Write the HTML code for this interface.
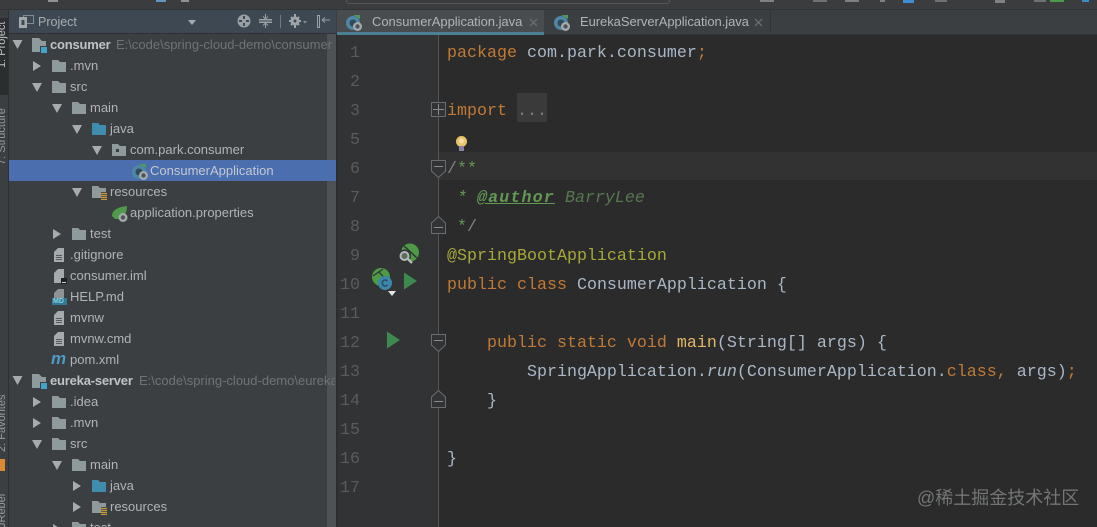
<!DOCTYPE html>
<html><head><meta charset="utf-8">
<style>
html,body{margin:0;padding:0;background:#3c3f41}
#r{position:relative;width:1097px;height:527px;overflow:hidden;background:#3c3f41;font-family:"Liberation Sans",sans-serif;filter:blur(.35px)}
.a{position:absolute}
.t{position:absolute;font-size:13px;line-height:16px;color:#b0b4b6;white-space:pre}
.b{font-weight:bold;color:#bfc3c5;letter-spacing:-.2px}
.g{color:#6f7375}
.c{position:absolute;left:447px;font-family:"Liberation Mono",monospace;font-size:16.67px;line-height:20px;color:#a9b7c6;white-space:pre}
.k{color:#c07a35}
.n{position:absolute;width:22px;text-align:right;left:338px;font-family:"Liberation Mono",monospace;font-size:16.67px;line-height:20px;color:#595c5d}
.v{position:absolute;left:-33px;width:70px;font-size:11px;line-height:16px;white-space:pre;color:#9a9d9f;transform:rotate(-90deg)}
svg{position:absolute;overflow:visible}
</style></head><body><div id="r">
<svg width="0" height="0" style="position:absolute">
<defs>
<symbol id="fo" viewBox="0 0 14 12"><path d="M0 0H6L8 2H14V12H0Z" fill="#8f9a9d"/></symbol>
<symbol id="fb" viewBox="0 0 14 12"><path d="M0 0H6L8 2H14V12H0Z" fill="#3f8caf"/></symbol>
<symbol id="fp" viewBox="0 0 14 12"><path d="M0 0H6L8 2H14V12H0Z" fill="#8f9a9d"/><rect x="4" y="5" width="3" height="3" fill="#3c3f41"/></symbol>
<symbol id="fr" viewBox="0 0 15 14"><path d="M0 0H6L8 2H14V6H9V12H0Z" fill="#8f9a9d"/><path d="M9 7.5H15M9 9.5H15M9 11.500H15M9 13.500H15" stroke="#c9993f" stroke-width="1.200"/></symbol>
<symbol id="mo" viewBox="0 0 15 15"><path d="M0 0H7L10 3H14V14H0Z" fill="#8f9a9d"/><rect x="8" y="8" width="7" height="7" fill="#3c3f41"/><rect x="9" y="9" width="6" height="6" fill="#3fa2cf"/></symbol>
<symbol id="fi" viewBox="0 0 10 14"><path d="M0 4L4 0H10V14H0Z" fill="#a5abad"/><path d="M2 7.500H8M2 9.500H8M2 11.500H8" stroke="#55595b" stroke-width=".9"/></symbol>
<symbol id="down" viewBox="0 0 10 9"><path d="M0 0H10L5 9Z" fill="#a7abad"/></symbol>
<symbol id="right" viewBox="0 0 8 10"><path d="M0 0L8 5L0 10Z" fill="#a7abad"/></symbol>
<symbol id="jc" viewBox="0 0 16 16"><circle cx="7" cy="8" r="7" fill="#4d87a5"/><circle cx="7" cy="8" r="3.500" fill="#34495a"/><path d="M7 0L14 4V0Z" fill="#4a9c56"/><circle cx="11.500" cy="11.500" r="4.500" fill="#a5abad"/><circle cx="11.500" cy="11.500" r="2.200" fill="#4f5557"/></symbol>
<symbol id="spr" viewBox="0 0 16 16"><path d="M0 10C0 4 6 1 15 0C15 4 14 10 8 13L3 13Z" fill="#4f9a4a"/><circle cx="11" cy="11.500" r="4.500" fill="#a5abad"/><circle cx="11" cy="11.500" r="2.200" fill="#4f5557"/></symbol>
<symbol id="ply" viewBox="0 0 13 17"><path d="M0 0L13 8.500L0 17Z" fill="#3e8a4e"/></symbol>
</defs>
</svg>

<!-- top toolbar -->
<div class="a" style="left:0;top:0;width:1097px;height:9px;background:#3a3c3e;border-bottom:1px solid #323436"></div>
<div class="a" style="left:346px;top:0;width:322px;height:3px;border:1px solid #55585a;border-top:none;border-radius:0 0 3px 3px"></div>
<div class="a" style="left:48px;top:0;width:10px;height:2px;background:#8f9395"></div>
<div class="a" style="left:156px;top:0;width:10px;height:2px;background:#5e97c6"></div>
<div class="a" style="left:181px;top:0;width:8px;height:2px;background:#8f9395"></div>
<div class="a" style="left:760px;top:0;width:14px;height:2px;background:#7d8183"></div>
<div class="a" style="left:813px;top:0;width:14px;height:2px;background:#6d7173"></div>
<div class="a" style="left:845px;top:0;width:14px;height:2px;background:#7d8183"></div>
<div class="a" style="left:880px;top:0;width:5px;height:2px;background:#7d8183"></div>
<div class="a" style="left:903px;top:0;width:11px;height:3px;background:#3f8fd0"></div>
<div class="a" style="left:935px;top:0;width:12px;height:2px;background:#6d7173"></div>
<div class="a" style="left:995px;top:0;width:10px;height:3px;background:#7d8183"></div>
<div class="a" style="left:1034px;top:0;width:12px;height:2px;background:#6d7173"></div>
<div class="a" style="left:1050px;top:0;width:14px;height:2px;background:#4a9c46"></div>
<div class="a" style="left:1082px;top:0;width:7px;height:2px;background:#3b8dc8"></div>

<!-- left stripe -->
<div class="a" style="left:0;top:10px;width:8px;height:517px;background:#3c3f41;border-right:1px solid #2e3031"></div>
<div class="a" style="left:0;top:18px;width:8px;height:77px;background:#2b2d2e"></div>
<div class="v" style="top:25px;color:#c0c3c5">1: Project</div>
<div class="v" style="top:122px">7: Structure</div>
<div class="v" style="top:409px">2: Favorites</div>
<div class="a" style="left:0;top:459px;width:5px;height:12px;background:#d98a32"></div>
<div class="v" style="top:485px">JRebel</div>

<!-- project header -->
<div class="a" style="left:9px;top:10px;width:328px;height:23px;background:#3d4853;border-bottom:1px solid #2f3133"></div>
<svg style="left:19px;top:15px" width="15" height="13" viewBox="0 0 15 13"><rect x="4.500" y=".5" width="10" height="8" fill="none" stroke="#7c8b98"/><rect x="0" y="2" width="8" height="11" fill="#a3a8ab"/><rect x="2.500" y="5" width="3" height="5" fill="#3d4853"/></svg>
<div class="t" style="left:38px;top:14px;font-size:12.500px;color:#a8adb0">Project</div>
<svg style="left:188px;top:20px" width="8" height="5" viewBox="0 0 8 5"><path d="M0 0H8L4 5Z" fill="#a7abad"/></svg>
<svg style="left:237px;top:14px" width="14" height="14" viewBox="0 0 14 14"><circle cx="7" cy="7" r="6.500" fill="#9aa0a3"/><path d="M7 2V5M7 9V12M2 7H5M9 7H12" stroke="#3d4853" stroke-width="2"/></svg>
<svg style="left:259px;top:14px" width="13" height="14" viewBox="0 0 13 14"><path d="M0 7H13M6.500 0V4M6.500 10V14M4 2.500L6.500 5L9 2.500M4 11.500L6.500 9L9 11.500M0 5.500H13M0 8.500H13" stroke="#9aa0a3" fill="none" stroke-width="1"/></svg>
<div class="a" style="left:280px;top:15px;width:1px;height:13px;background:#6f7a83"></div>
<svg style="left:289px;top:14px" width="18" height="14" viewBox="0 0 18 14"><circle cx="6" cy="7" r="4.500" fill="#a0a5a8"/><path d="M6 0V14M0 7H12M2 3L10 11M10 3L2 11" stroke="#a0a5a8" stroke-width="2"/><circle cx="6" cy="7" r="1.500" fill="#3d4853"/><path d="M14 7H18L16 9.500Z" fill="#8a8f92"/></svg>
<svg style="left:317px;top:15px" width="13" height="13" viewBox="0 0 13 13"><rect x=".5" y=".5" width="2" height="12" fill="none" stroke="#9aa0a3"/><path d="M5 5H13M5 5L8 2.500M5 5L8 7.500" stroke="#9aa0a3" fill="none"/></svg>

<!-- project tree -->
<div class="a" style="left:9px;top:160px;width:327px;height:21px;background:#4b6eaf"></div>
<div class="a" style="left:327px;top:34px;width:9px;height:493px;background:#4f5254"></div>
<div class="a" style="left:327px;top:160px;width:9px;height:21px;background:#4b6eaf"></div>

<svg style="left:12px;top:40px" width="11" height="9"><use href="#down"/></svg>
<svg style="left:32px;top:38px" width="15" height="15"><use href="#mo"/></svg>
<div class="t b" style="left:50px;top:37px">consumer</div>
<div class="t g" style="left:116px;top:37px;width:219px;overflow:hidden">E:\code\spring-cloud-demo\consumer</div>

<svg style="left:33px;top:61px" width="8" height="10"><use href="#right"/></svg>
<svg style="left:52px;top:60px" width="14" height="12"><use href="#fo"/></svg>
<div class="t" style="left:70px;top:58px">.mvn</div>

<svg style="left:32px;top:83px" width="10" height="9"><use href="#down"/></svg>
<svg style="left:52px;top:81px" width="14" height="12"><use href="#fo"/></svg>
<div class="t" style="left:70px;top:79px">src</div>

<svg style="left:52px;top:104px" width="10" height="9"><use href="#down"/></svg>
<svg style="left:72px;top:102px" width="14" height="12"><use href="#fo"/></svg>
<div class="t" style="left:90px;top:100px">main</div>

<svg style="left:72px;top:125px" width="10" height="9"><use href="#down"/></svg>
<svg style="left:92px;top:123px" width="14" height="12"><use href="#fb"/></svg>
<div class="t" style="left:110px;top:121px">java</div>

<svg style="left:92px;top:146px" width="10" height="9"><use href="#down"/></svg>
<svg style="left:112px;top:144px" width="14" height="12"><use href="#fp"/></svg>
<div class="t" style="left:130px;top:142px">com.park.consumer</div>

<svg style="left:132px;top:164px" width="16" height="16"><use href="#jc"/></svg>
<div class="t" style="left:150px;top:163px;color:#c3c9d2">ConsumerApplication</div>

<svg style="left:72px;top:188px" width="10" height="9"><use href="#down"/></svg>
<svg style="left:92px;top:186px" width="15" height="14"><use href="#fr"/></svg>
<div class="t" style="left:110px;top:184px">resources</div>

<svg style="left:112px;top:206px" width="16" height="16"><use href="#spr"/></svg>
<div class="t" style="left:130px;top:205px">application.properties</div>

<svg style="left:53px;top:229px" width="8" height="10"><use href="#right"/></svg>
<svg style="left:72px;top:228px" width="14" height="12"><use href="#fo"/></svg>
<div class="t" style="left:90px;top:226px">test</div>

<svg style="left:54px;top:248px" width="10" height="14"><use href="#fi"/></svg>
<div class="t" style="left:70px;top:247px">.gitignore</div>
<svg style="left:54px;top:269px" width="10" height="14" viewBox="0 0 10 14"><path d="M0 4L4 0H10V14H0Z" fill="#a5abad"/></svg>
<div class="a" style="left:61px;top:278px;width:6px;height:6px;background:#1d1f20"></div>
<div class="a" style="left:62px;top:282px;width:4px;height:1px;background:#d0d0d0"></div>
<div class="t" style="left:70px;top:268px">consumer.iml</div>
<svg style="left:54px;top:289px" width="10" height="10" viewBox="0 0 10 10"><path d="M0 4L4 0H10V10H0Z" fill="#8d9395"/></svg>
<div class="a" style="left:52px;top:298px;width:15px;height:7px;background:#2e7a94"></div>
<div class="t" style="left:53px;top:298px;font-size:7px;line-height:7px;font-weight:bold;color:#8fd0e4">MD</div>
<div class="t" style="left:70px;top:289px">HELP.md</div>
<svg style="left:54px;top:311px" width="10" height="14"><use href="#fi"/></svg>
<div class="t" style="left:70px;top:310px">mvnw</div>
<svg style="left:54px;top:332px" width="10" height="14"><use href="#fi"/></svg>
<div class="t" style="left:70px;top:331px">mvnw.cmd</div>
<div class="t" style="left:51px;top:350px;font-size:17px;line-height:18px;font-weight:bold;font-style:italic;color:#4d9ac4">m</div>
<div class="t" style="left:70px;top:352px">pom.xml</div>

<svg style="left:12px;top:376px" width="11" height="9"><use href="#down"/></svg>
<svg style="left:32px;top:374px" width="15" height="15"><use href="#mo"/></svg>
<div class="t b" style="left:50px;top:373px">eureka-server</div>
<div class="t g" style="left:139px;top:373px;width:196px;overflow:hidden">E:\code\spring-cloud-demo\eureka-server</div>

<svg style="left:33px;top:397px" width="8" height="10"><use href="#right"/></svg>
<svg style="left:52px;top:396px" width="14" height="12"><use href="#fo"/></svg>
<div class="t" style="left:70px;top:394px">.idea</div>
<svg style="left:33px;top:418px" width="8" height="10"><use href="#right"/></svg>
<svg style="left:52px;top:417px" width="14" height="12"><use href="#fo"/></svg>
<div class="t" style="left:70px;top:415px">.mvn</div>
<svg style="left:32px;top:440px" width="10" height="9"><use href="#down"/></svg>
<svg style="left:52px;top:438px" width="14" height="12"><use href="#fo"/></svg>
<div class="t" style="left:70px;top:436px">src</div>
<svg style="left:52px;top:461px" width="10" height="9"><use href="#down"/></svg>
<svg style="left:72px;top:459px" width="14" height="12"><use href="#fo"/></svg>
<div class="t" style="left:90px;top:457px">main</div>
<svg style="left:73px;top:481px" width="8" height="10"><use href="#right"/></svg>
<svg style="left:92px;top:480px" width="14" height="12"><use href="#fb"/></svg>
<div class="t" style="left:110px;top:478px">java</div>
<svg style="left:73px;top:502px" width="8" height="10"><use href="#right"/></svg>
<svg style="left:92px;top:501px" width="15" height="14"><use href="#fr"/></svg>
<div class="t" style="left:110px;top:499px">resources</div>
<svg style="left:53px;top:524px" width="8" height="10"><use href="#right"/></svg>
<svg style="left:72px;top:522px" width="14" height="12"><use href="#fo"/></svg>
<div class="t" style="left:90px;top:520px">test</div>

<!-- editor -->
<div class="a" style="left:336px;top:10px;width:761px;height:24px;background:#3c3f41;border-bottom:1px solid #323232"></div>
<div class="a" style="left:337px;top:10px;width:207px;height:22px;background:#484c4e"></div>
<div class="a" style="left:337px;top:32px;width:207px;height:3px;background:#4a7f94"></div>
<svg style="left:346px;top:15px" width="16" height="16"><use href="#jc"/></svg>
<div class="t" style="left:372px;top:14px;color:#b0b4b6;font-size:13px;letter-spacing:-.03px">ConsumerApplication.java</div>
<svg style="left:529px;top:18px" width="9" height="9" viewBox="0 0 9 9"><path d="M1 1L8 8M8 1L1 8" stroke="#6e7274" stroke-width="1.200"/></svg>
<svg style="left:554px;top:15px" width="16" height="16"><use href="#jc"/></svg>
<div class="t" style="left:580px;top:14px;color:#b0b4b6;font-size:13px;letter-spacing:-.06px">EurekaServerApplication.java</div>
<svg style="left:754px;top:18px" width="9" height="9" viewBox="0 0 9 9"><path d="M1 1L8 8M8 1L1 8" stroke="#6e7274" stroke-width="1.200"/></svg>
<div class="a" style="left:770px;top:10px;width:1px;height:22px;background:#333"></div>

<div class="a" style="left:336px;top:35px;width:2px;height:492px;background:#2b2d2f"></div>
<div class="a" style="left:338px;top:35px;width:101px;height:492px;background:#313335"></div>
<div class="a" style="left:439px;top:35px;width:658px;height:492px;background:#2b2b2b"></div>
<div class="a" style="left:439px;top:152px;width:658px;height:28px;background:#323232"></div>
<div class="a" style="left:438px;top:35px;width:1px;height:492px;background:#555"></div>
<div class="a" style="left:517px;top:93px;width:30px;height:29px;background:#3a3a3a"></div>

<!-- line numbers -->
<div class="n" style="top:44px">1</div>
<div class="n" style="top:73px">2</div>
<div class="n" style="top:102px">3</div>
<div class="n" style="top:131px">5</div>
<div class="n" style="top:160px">6</div>
<div class="n" style="top:189px">7</div>
<div class="n" style="top:218px">8</div>
<div class="n" style="top:247px">9</div>
<div class="n" style="top:276px">10</div>
<div class="n" style="top:305px">11</div>
<div class="n" style="top:334px">12</div>
<div class="n" style="top:363px">13</div>
<div class="n" style="top:392px">14</div>
<div class="n" style="top:421px">15</div>
<div class="n" style="top:450px">16</div>
<div class="n" style="top:479px">17</div>

<!-- fold markers -->
<svg style="left:431px;top:102px" width="15" height="15" viewBox="0 0 15 15"><rect x=".5" y=".5" width="14" height="14" fill="#313335" stroke="#6a6d6f"/><path d="M2 7.500H13M7.500 2V13" stroke="#8a8d8f"/></svg>
<svg style="left:431px;top:160px" width="15" height="18" viewBox="0 0 15 18"><path d="M.5.500H14.500V11L7.500 17.500L.5 11Z" fill="#313335" stroke="#6a6d6f"/><path d="M3 6.500H12" stroke="#8a8d8f"/></svg>
<svg style="left:431px;top:216px" width="15" height="18" viewBox="0 0 15 18"><path d="M.5 17.500H14.500V7L7.500 .5L.5 7Z" fill="#313335" stroke="#6a6d6f"/><path d="M3 11.500H12" stroke="#8a8d8f"/></svg>
<svg style="left:431px;top:334px" width="15" height="18" viewBox="0 0 15 18"><path d="M.5.500H14.500V11L7.500 17.500L.5 11Z" fill="#313335" stroke="#6a6d6f"/><path d="M3 6.500H12" stroke="#8a8d8f"/></svg>
<svg style="left:431px;top:390px" width="15" height="18" viewBox="0 0 15 18"><path d="M.5 17.500H14.500V7L7.500 .5L.5 7Z" fill="#313335" stroke="#6a6d6f"/><path d="M3 11.500H12" stroke="#8a8d8f"/></svg>

<!-- bulb -->
<svg style="left:455px;top:136px" width="13" height="16" viewBox="0 0 13 16"><circle cx="6.500" cy="5.500" r="5.500" fill="#e8c46a"/><circle cx="6.500" cy="5" r="2.500" fill="#f3dfa5"/><rect x="4" y="10" width="5" height="5" fill="#8a7fa0"/></svg>

<!-- gutter icons -->
<svg style="left:398px;top:243px" width="21" height="21" viewBox="0 0 21 21"><circle cx="12" cy="9.500" r="9" fill="#4e9a45"/><path d="M6 3L19 15" stroke="#313335" stroke-width="1.500"/><circle cx="6.500" cy="13" r="6.500" fill="#313335"/><circle cx="6.500" cy="13" r="4" fill="#5d6a58" stroke="#b4b8ba" stroke-width="2"/><path d="M10 16L14 20" stroke="#b4b8ba" stroke-width="2.500"/></svg>
<svg style="left:372px;top:268px" width="19" height="19" viewBox="0 0 19 19"><circle cx="9" cy="9" r="9" fill="#4e9a45"/><path d="M1 8L11 1M7 4L16 14" stroke="#313335" stroke-width="1.300"/></svg>
<svg style="left:378px;top:276px" width="14" height="14" viewBox="0 0 14 14"><circle cx="7" cy="7" r="7" fill="#3a87ac"/><path d="M9.500 5A3 3 0 1 0 9.500 9" fill="none" stroke="#2a4a5e" stroke-width="1.500"/></svg>
<svg style="left:388px;top:291px" width="8" height="5" viewBox="0 0 8 5"><path d="M0 0H8L4 5Z" fill="#e5e5e5"/></svg>
<svg style="left:404px;top:272px" width="13" height="18"><use href="#ply"/></svg>
<svg style="left:387px;top:331px" width="13" height="18"><use href="#ply"/></svg>

<!-- code -->
<div class="c" style="top:44px"><span class="k">package</span> com.park.consumer<span class="k">;</span></div>
<div class="c" style="top:102px"><span class="k">import</span> <span style="color:#7b7d7d">...</span></div>
<div class="c" style="top:160px;color:#629755"><span style="color:#808080">/</span>**</div>
<div class="c" style="top:189px;color:#629755;font-style:italic"> * <b style="text-decoration:underline;color:#629755;letter-spacing:1.14px">@author</b> <span style="color:#56784f">BarryLee</span></div>
<div class="c" style="top:218px;color:#629755"> *<span style="color:#808080">/</span></div>
<div class="c" style="top:247px;color:#a8a83a">@SpringBootApplication</div>
<div class="c" style="top:276px"><span class="k">public class</span> ConsumerApplication {</div>
<div class="c" style="top:334px">    <span class="k">public static void</span> <span style="color:#e2b768">main</span>(String[] args) {</div>
<div class="c" style="top:363px">        SpringApplication.<i>run</i>(ConsumerApplication.<span class="k">class,</span> args)<span class="k">;</span></div>
<div class="c" style="top:392px">    }</div>
<div class="c" style="top:450px">}</div>

<!-- watermark -->
<div class="t" style="left:917px;top:488px;font-size:18px;line-height:21px;color:#737576;font-family:'Liberation Sans','Noto Sans CJK SC',sans-serif">@稀土掘金技术社区</div>
</div></body></html>
